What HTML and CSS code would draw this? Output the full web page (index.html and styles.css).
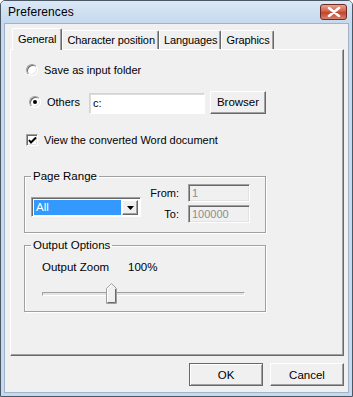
FILE: index.html
```html
<!DOCTYPE html>
<html lang="en">
<head>
    <meta charset="UTF-8">
    <title>Preferences</title>
    <link rel="stylesheet" href="styles.css">
</head>
<body>
    <div class="window">
        <div class="titlebar">
            <span class="title">Preferences</span>
            <div class="close-btn">
                <svg width="14" height="10" viewBox="0 0 14 10">
                    <path d="M2 1 L12 9 M12 1 L2 9" stroke="#fff" stroke-width="2.6" stroke-linecap="round"/>
                </svg>
            </div>
        </div>

        <div class="client">
            <div class="tabs">
                <div class="tab active">General</div>
                <div class="tab">Character position</div>
                <div class="tab">Languages</div>
                <div class="tab">Graphics</div>
            </div>

            <div class="panel">
                <div class="row radio-row first">
                    <span class="radio"></span>
                    <span>Save as input folder</span>
                </div>

                <div class="row others-row">
                    <span class="radio checked"></span>
                    <span class="others-label">Others</span>
                    <div class="textbox">c:</div>
                    <div class="button browse">Browser</div>
                </div>

                <div class="row check-row">
                    <span class="checkbox">
                        <svg width="9" height="9" viewBox="0 0 9 9">
                            <path d="M1 4 L3 6.5 L8 1.5" stroke="#000" stroke-width="2" fill="none"/>
                        </svg>
                    </span>
                    <span>View the converted Word document</span>
                </div>

                <fieldset class="group range-group">
                    <legend>Page Range</legend>
                    <div class="range-body">
                        <div class="combo">
                            <div class="combo-value">All</div>
                            <div class="combo-btn">
                                <svg width="7" height="4" viewBox="0 0 7 4"><path d="M0 0 H7 L3.5 4 Z" fill="#000"/></svg>
                            </div>
                        </div>
                        <div class="range-fields">
                            <span class="range-label">From:</span>
                            <div class="textbox disabled">1</div>
                            <span class="range-label">To:</span>
                            <div class="textbox disabled">100000</div>
                        </div>
                    </div>
                </fieldset>

                <fieldset class="group output-group">
                    <legend>Output Options</legend>
                    <div class="zoom-row">
                        <span class="zoom-label">Output Zoom</span>
                        <span>100%</span>
                    </div>
                    <div class="slider">
                        <div class="track"></div>
                        <svg class="thumb" width="11" height="21" viewBox="0 0 11 21">
                            <path d="M0.5 20.5 V5.5 L5.5 0.5 L10.5 5.5 V20.5 Z" fill="#f0f0f0" stroke="#a0a0a0"/>
                            <path d="M1.5 19.5 V5.9 L5.5 1.9" fill="none" stroke="#fff"/>
                            <path d="M9.5 5.9 V19.5 H1.5" fill="none" stroke="#696969"/>
                        </svg>
                    </div>
                </fieldset>
            </div>

            <div class="footer">
                <div class="button default">OK</div>
                <div class="button">Cancel</div>
            </div>
        </div>
    </div>
</body>
</html>
```

FILE: styles.css
```css
body {
    margin: 0;
    font-family: 'Liberation Sans', Arial, sans-serif;
    font-size: 11px;
    color: #000;
    background: #fff;
}

.window {
    width: 353px;
    height: 397px;
    box-sizing: border-box;
    border: 1px solid #4a5866;
    border-radius: 5px 5px 0 0;
    background: #c6d9ee;
    display: flex;
    flex-direction: column;
}

.titlebar {
    height: 21px;
    display: flex;
    align-items: center;
    justify-content: space-between;
    padding: 0 5px 0 7px;
    background: linear-gradient(#dbe8f6, #c6d9ee);
    border-radius: 4px 4px 0 0;
}

.title {
    font-size: 12px;
    letter-spacing: 0.1px;
}

.close-btn {
    width: 25px;
    height: 14px;
    margin-top: 1px;
    border: 1px solid #6d2a22;
    border-radius: 3px;
    background: linear-gradient(#e8a493, #d0614a 45%, #c2432b 55%, #d9826a);
    display: flex;
    align-items: center;
    justify-content: center;
}

.client {
    flex: 1;
    margin: 1px 3px 3px 3px;
    border: 1px solid #9fb3c9;
    background: #f0f0f0;
    padding: 4px 4px 0 5px;
    display: flex;
    flex-direction: column;
}

.tabs {
    display: flex;
    align-items: flex-end;
    padding-left: 2px;
    height: 21px;
}

.tab {
    height: 19px;
    box-sizing: border-box;
    padding: 0 3px 0 4px;
    display: flex;
    align-items: center;
    border-top: 1px solid #fff;
    border-left: 1px solid #fff;
    border-right: 1px solid #696969;
    box-shadow: inset -1px 0 #a0a0a0;
    border-radius: 2px 2px 0 0;
    font-size: 11px;
    letter-spacing: -0.1px;
}

.tab.active {
    position: relative;
    height: 22px;
    margin-bottom: -1px;
    background: #f0f0f0;
    padding: 0 5px 2px 5px;
}

.panel {
    height: 307px;
    box-sizing: border-box;
    border-top: 1px solid #fff;
    border-left: 1px solid #fff;
    border-right: 1px solid #696969;
    border-bottom: 1px solid #696969;
    box-shadow: inset -1px -1px #a0a0a0;
    padding: 0 0 0 15px;
    display: flex;
    flex-direction: column;
    font-size: 11px;
}

.row {
    display: flex;
    align-items: center;
}

.radio-row.first {
    margin-top: 13px;
    height: 14px;
    gap: 6px;
}

.radio {
    width: 12px;
    height: 12px;
    box-sizing: border-box;
    border-radius: 50%;
    border: 1px solid;
    border-color: #a0a0a0 #fff #fff #a0a0a0;
    box-shadow: inset 1px 1px #696969, inset -1px -1px #e3e3e3;
    background: #fff;
    display: flex;
    align-items: center;
    justify-content: center;
}

.radio.checked::after {
    content: '';
    width: 4px;
    height: 4px;
    border-radius: 50%;
    background: #000;
}

.others-row {
    margin-top: 13px;
    height: 24px;
    padding-left: 3px;
}

.others-label {
    margin-left: 6px;
    width: 42px;
}

.textbox {
    box-sizing: border-box;
    background: #fff;
    border: 1px solid;
    border-color: #a0a0a0 #fff #fff #a0a0a0;
    box-shadow: inset 1px 1px #696969, inset -1px -1px #e3e3e3;
    padding: 2px 3px;
}

.others-row .textbox {
    width: 116px;
    height: 21px;
    margin-top: 3px;
    padding: 3px 3px;
    border-color: #d4d4d4 #fff #fff #d4d4d4;
    box-shadow: inset 1px 1px #dcdcdc;
}

.button {
    box-sizing: border-box;
    display: flex;
    align-items: center;
    justify-content: center;
    background: #f0f0f0;
    border: 1px solid;
    border-color: #fff #696969 #696969 #fff;
    box-shadow: inset -1px -1px #a0a0a0;
    font-size: 11.5px;
}

.button.browse {
    width: 56px;
    height: 23px;
    margin-left: 5px;
}

.check-row {
    margin-top: 20px;
    gap: 6px;
}

.checkbox {
    width: 12px;
    height: 12px;
    box-sizing: border-box;
    border: 1px solid;
    border-color: #a0a0a0 #fff #fff #a0a0a0;
    box-shadow: inset 1px 1px #696969, inset -1px -1px #e3e3e3;
    background: #fff;
    display: flex;
    align-items: center;
    justify-content: center;
}

.group {
    margin: 0 0 0 -2px;
    width: 242px;
    box-sizing: border-box;
    border: 1px solid #a0a0a0;
    box-shadow: inset 1px 1px #fff, 1px 1px #fff;
    padding: 0;
}

.group legend {
    margin-left: 6px;
    padding: 0 2px;
    font-size: 11.5px;
}

.range-group {
    margin-top: 24px;
    height: 63px;
}

.range-body {
    display: flex;
    align-items: flex-start;
}

.combo {
    margin: 15px 0 0 6px;
    width: 110px;
    height: 20px;
    box-sizing: border-box;
    border: 1px solid;
    border-color: #a0a0a0 #fff #fff #a0a0a0;
    box-shadow: inset 1px 1px #696969;
    background: #fff;
    display: flex;
    padding: 2px 2px 1px 2px;
}

.combo-value {
    flex: 1;
    background: #3399ff;
    color: #fff;
    padding-left: 2px;
    line-height: 15px;
    font-size: 11.5px;
}

.combo-btn {
    width: 16px;
    box-sizing: border-box;
    margin-left: 1px;
    border: 1px solid;
    border-color: #fff #696969 #696969 #fff;
    box-shadow: inset -1px -1px #a0a0a0;
    background: #f0f0f0;
    display: flex;
    align-items: center;
    justify-content: center;
}

.range-fields {
    margin: 2px 0 0 0;
    display: grid;
    grid-template-columns: 38px 62px;
    column-gap: 9px;
    row-gap: 3px;
    align-items: center;
}

.range-label {
    text-align: right;
}

.range-fields .textbox {
    height: 18px;
    background: #f0f0f0;
    color: #8d8d8d;
    padding: 1px 3px;
    line-height: 15px;
}

.output-group {
    margin-top: 6px;
    height: 73px;
}

.zoom-row {
    display: flex;
    margin: 10px 0 0 17px;
    font-size: 11.5px;
}

.zoom-label {
    width: 86px;
}

.slider {
    position: relative;
    margin: 10px 0 0 17px;
    width: 203px;
    height: 22px;
    display: flex;
    align-items: center;
}

.track {
    width: 100%;
    height: 4px;
    box-sizing: border-box;
    border: 1px solid;
    border-color: #a0a0a0 #fff #fff #a0a0a0;
    background: #e3e3e3;
}

.thumb {
    position: absolute;
    left: 64px;
    top: 0;
}

.footer {
    display: flex;
    justify-content: flex-end;
    gap: 7px;
    margin-top: 7px;
}

.footer .button {
    width: 74px;
    height: 23px;
}

.footer .button.default {
    border: 1px solid #696969;
    box-shadow: inset 1px 1px #fff, inset -1px -1px #a0a0a0;
}
```
